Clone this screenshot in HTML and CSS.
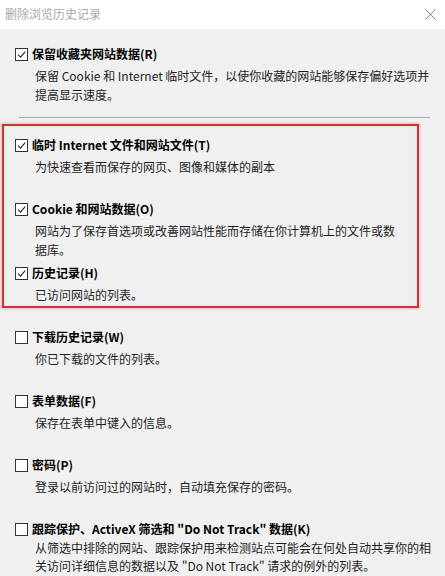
FILE: index.html
```html
<!DOCTYPE html>
<html lang="zh-CN">
<head>
<meta charset="utf-8">
<title>删除浏览历史记录</title>
<link rel="stylesheet" href="styles.css">
</head>
<body>
<div class="dialog">
  <div class="titlebar">
    <span class="title">删除浏览历史记录</span>
    <svg class="close" width="11" height="11" viewBox="0 0 11 11"><path d="M0.5 0.5 L10.5 10.5 M10.5 0.5 L0.5 10.5" stroke="#8a8a8a" stroke-width="1" fill="none"/></svg>
  </div>
  <div class="content">
    <div class="item">
      <div class="row"><span class="cb checked"><svg viewBox="0 0 12 12"><path d="M2.2 6.2 L4.9 8.9 L10 2.8" stroke="#222" stroke-width="1.1" fill="none"/></svg></span><span class="label">保留收藏夹网站数据(R)</span></div>
      <div class="desc">保留 Cookie 和 Internet 临时文件，以使你收藏的网站能够保存偏好选项并<br>提高显示速度。</div>
    </div>
    <div class="divider"></div>
    <div class="item">
      <div class="row"><span class="cb checked"><svg viewBox="0 0 12 12"><path d="M2.2 6.2 L4.9 8.9 L10 2.8" stroke="#222" stroke-width="1.1" fill="none"/></svg></span><span class="label">临时 Internet 文件和网站文件(T)</span></div>
      <div class="desc">为快速查看而保存的网页、图像和媒体的副本</div>
    </div>
    <div class="item">
      <div class="row"><span class="cb checked"><svg viewBox="0 0 12 12"><path d="M2.2 6.2 L4.9 8.9 L10 2.8" stroke="#222" stroke-width="1.1" fill="none"/></svg></span><span class="label">Cookie 和网站数据(O)</span></div>
      <div class="desc">网站为了保存首选项或改善网站性能而存储在你计算机上的文件或数<br>据库。</div>
    </div>
    <div class="item">
      <div class="row"><span class="cb checked"><svg viewBox="0 0 12 12"><path d="M2.2 6.2 L4.9 8.9 L10 2.8" stroke="#222" stroke-width="1.1" fill="none"/></svg></span><span class="label">历史记录(H)</span></div>
      <div class="desc">已访问网站的列表。</div>
    </div>
    <div class="item">
      <div class="row"><span class="cb"></span><span class="label">下载历史记录(W)</span></div>
      <div class="desc">你已下载的文件的列表。</div>
    </div>
    <div class="item">
      <div class="row"><span class="cb"></span><span class="label">表单数据(F)</span></div>
      <div class="desc">保存在表单中键入的信息。</div>
    </div>
    <div class="item">
      <div class="row"><span class="cb"></span><span class="label">密码(P)</span></div>
      <div class="desc">登录以前访问过的网站时，自动填充保存的密码。</div>
    </div>
    <div class="item last">
      <div class="row"><span class="cb"></span><span class="label">跟踪保护、ActiveX 筛选和 "Do Not Track" 数据(K)</span></div>
      <div class="desc">从筛选中排除的网站、跟踪保护用来检测站点可能会在何处自动共享你的相<br>关访问详细信息的数据以及 "Do Not Track" 请求的例外的列表。</div>
    </div>
  </div>
  <div class="highlight"></div>
</div>
</body>
</html>
```
FILE: styles.css
```css
html, body {
  margin: 0;
  padding: 0;
}
body {
  width: 445px;
  height: 576px;
  overflow: hidden;
  background: #f0f0f0;
  font-family: "Noto Sans CJK SC", "Noto Sans", sans-serif;
}
.dialog {
  position: relative;
  width: 445px;
  height: 576px;
  background: #f0f0f0;
}
.titlebar {
  height: 29px;
  background: #ffffff;
  display: flex;
  align-items: center;
  justify-content: space-between;
  padding: 0 9px 2px 5px;
  box-sizing: border-box;
}
.title {
  font-size: 12px;
  color: #a8a8a8;
  line-height: 16px;
}
.close {
  display: block;
  margin-top: 2px;
}
.content {
  padding: 15px 0 0 15px;
}
.item {
  height: 64px;
}
.item.last {
  height: auto;
}
.row {
  display: flex;
  align-items: center;
  height: 20px;
}
.cb {
  width: 11px;
  height: 11px;
  border: 1px solid #333333;
  background: #ffffff;
  flex: none;
  display: flex;
}
.cb svg {
  width: 11px;
  height: 11px;
}
.label {
  margin-left: 4px;
  font-size: 12px;
  font-weight: bold;
  color: #000000;
  line-height: 20px;
  white-space: nowrap;
}
.desc {
  margin-top: 2px;
  padding-left: 20px;
  font-size: 12px;
  line-height: 19px;
  color: #1e1e1e;
  white-space: nowrap;
}
.last .desc {
  margin-top: 0;
  line-height: 18px;
}
.divider {
  margin: 9px 0 17px 4px;
  width: 411px;
  height: 1px;
  background: #a9a9a9;
}
.highlight {
  position: absolute;
  left: 2px;
  top: 124px;
  width: 413px;
  height: 180px;
  border: 2px solid #c23a3d;
  box-shadow: 0 0 2px 1px rgba(235, 120, 120, 0.45), inset 0 0 2px rgba(235, 120, 120, 0.4);
}
```
